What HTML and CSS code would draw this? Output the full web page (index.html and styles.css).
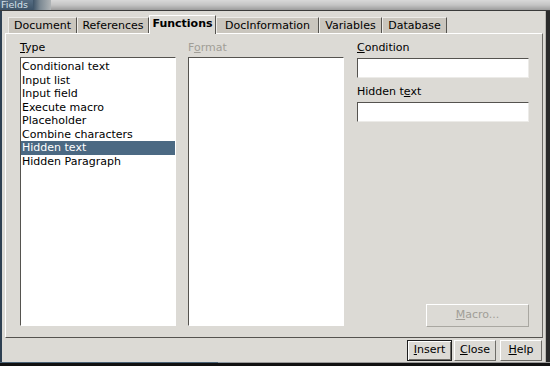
FILE: index.html
```html
<!DOCTYPE html>
<html>
<head>
<meta charset="utf-8">
<link rel="stylesheet" href="styles.css">
</head>
<body>
<div class="win">
  <div class="titlebar">
    <div class="title">Fields</div>
    <div class="tgrip"></div>
    <div class="tfill"></div>
  </div>
  <div class="frame">
    <div class="content">
      <div class="tabs">
        <div class="tab t-doc">Document</div>
        <div class="tab t-ref">References</div>
        <div class="tab active t-fun">Functions</div>
        <div class="tab t-info">DocInformation</div>
        <div class="tab t-var">Variables</div>
        <div class="tab t-db">Database</div>
      </div>
      <div class="panel">
        <div class="col col-type">
          <div class="label"><u>T</u>ype</div>
          <div class="list">
            <div class="item">Conditional text</div>
            <div class="item">Input list</div>
            <div class="item">Input field</div>
            <div class="item">Execute macro</div>
            <div class="item">Placeholder</div>
            <div class="item">Combine characters</div>
            <div class="item sel">Hidden text</div>
            <div class="item">Hidden Paragraph</div>
          </div>
        </div>
        <div class="col col-format">
          <div class="label dis">F<u>o</u>rmat</div>
          <div class="list"></div>
        </div>
        <div class="col col-right">
          <div class="label"><u>C</u>ondition</div>
          <div class="input"></div>
          <div class="label label2">Hidden t<u>e</u>xt</div>
          <div class="input"></div>
          <div class="spacer"></div>
          <div class="btn macro"><u>M</u>acro...</div>
        </div>
      </div>
      <div class="buttons">
        <div class="btn def"><u>I</u>nsert</div>
        <div class="btn b-close"><u>C</u>lose</div>
        <div class="btn b-help"><u>H</u>elp</div>
      </div>
    </div>
  </div>
  <div class="bottombar">
    <div class="bleft"></div>
    <div class="bgrip"></div>
    <div class="bfill"></div>
  </div>
</div>
</body>
</html>
```
FILE: styles.css
```css
* { box-sizing: border-box; }
html, body { margin: 0; padding: 0; }
body {
  width: 550px;
  height: 366px;
  overflow: hidden;
  background: #1c1c1c;
  font-family: "DejaVu Sans", sans-serif;
  font-size: 11px;
  color: #000;
}
.win {
  width: 550px;
  height: 366px;
  display: flex;
  flex-direction: column;
}
.titlebar {
  height: 11px;
  display: flex;
  border-bottom: 1px solid #3a3a3a;
  flex: none;
}
.title {
  width: 33px;
  background: linear-gradient(#566d83, #3d5368);
  color: #d6e0ea;
  font-size: 9.5px;
  line-height: 10px;
  padding-left: 1px;
  overflow: hidden;
  white-space: nowrap;
}
.tgrip {
  width: 18px;
  background: linear-gradient(90deg, #3d5368, #7d8a94 40%, #b0b4b6);
}
.tfill {
  flex: 1;
  background: linear-gradient(#d8d8d8, #c4c4c4 50%, #9c9c9c);
}
.frame {
  flex: 1;
  display: flex;
  border-left: 2px solid #2e4052;
  border-right: 4px solid #2a2a2a;
  min-height: 0;
}
.content {
  flex: 1;
  background: #dcdad5;
  display: flex;
  flex-direction: column;
  padding: 4px 2px 0 3px;
  border-right: 1px solid #b8b6b0;
}
.tabs {
  display: flex;
  height: 18px;
  padding-left: 3px;
  align-items: flex-end;
  position: relative;
  z-index: 1;
}
.tab {
  height: 16px;
  background: #cac6be;
  border-left: 1px solid #ecebe8;
  border-top: 1px solid #ecebe8;
  border-right: 1px solid #55534f;
  line-height: 15px;
  text-align: center;
  white-space: nowrap;
}
.tab.active {
  height: 19px;
  margin-bottom: -1px;
  background: #dcdad5;
  font-weight: bold;
  border-left: 1px solid #ffffff;
  border-top: 1px solid #ffffff;
  line-height: 16px;
}
.t-doc { width: 69px; }
.t-ref { width: 72px; }
.t-fun { width: 67px; }
.t-info { width: 103px; }
.t-var { width: 63px; }
.t-db { width: 65px; }
.panel {
  height: 305px;
  display: flex;
  border-top: 1px solid #ffffff;
  border-left: 1px solid #ffffff;
  border-right: 1px solid #6e6c67;
  border-bottom: 1px solid #55534f;
  padding: 7px 13px 10px 14px;
  flex: none;
}
.col { display: flex; flex-direction: column; }
.col-type { width: 156px; }
.col-format { width: 156px; margin-left: 12px; }
.col-right { width: 172px; margin-left: 13px; }
.label {
  height: 13px;
  line-height: 13px;
  margin-bottom: 3px;
  white-space: nowrap;
}
.label.dis { color: #a19e97; }
.list {
  height: 269px;
  background: #fff;
  border-top: 1px solid #55534f;
  border-left: 1px solid #55534f;
  border-right: 1px solid #ffffff;
  border-bottom: 1px solid #ffffff;
  padding-top: 2px;
}
.item {
  height: 13.5px;
  line-height: 13.5px;
  padding-left: 1px;
  white-space: nowrap;
}
.item.sel {
  background: #4b6983;
  color: #fff;
}
.input {
  height: 20px;
  background: #fff;
  border-top: 1px solid #55534f;
  border-left: 1px solid #55534f;
  border-right: 1px solid #ecebe8;
  border-bottom: 1px solid #ecebe8;
  margin-top: 1px;
}
.label2 { margin-top: 7px; }
.spacer { flex: 1; }
.btn {
  height: 23px;
  line-height: 20px;
  text-align: center;
  background: #dcdad5;
  border-top: 1px solid #ffffff;
  border-left: 1px solid #ffffff;
  border-right: 1px solid #6e6c67;
  border-bottom: 1px solid #6e6c67;
  white-space: nowrap;
}
.macro {
  width: 103px;
  align-self: flex-end;
  color: #a19e97;
  border-right-color: #a9a7a1;
  border-bottom-color: #a9a7a1;
}
.buttons {
  display: flex;
  justify-content: flex-end;
  gap: 2px;
  padding-top: 2px;
  padding-right: 1px;
}
.buttons .btn {
  height: 21px;
  line-height: 18px;
}
.def {
  width: 45px;
  border: 1px solid #1e1e1e;
  box-shadow: inset 1px 1px 0 #ffffff, inset -1px -1px 0 #6e6c67;
}
.b-close { width: 42px; }
.b-help { width: 42px; margin-left: 2px; }
.bottombar {
  height: 4px;
  display: flex;
  flex: none;
  background: #111;
}
.bleft {
  width: 218px;
  border-top: 1px solid #4a6276;
}
.bgrip {
  width: 12px;
  border-top: 1px solid #8c98a2;
}
.bfill {
  flex: 1;
  border-top: 1px solid #9a9a9a;
}
```
